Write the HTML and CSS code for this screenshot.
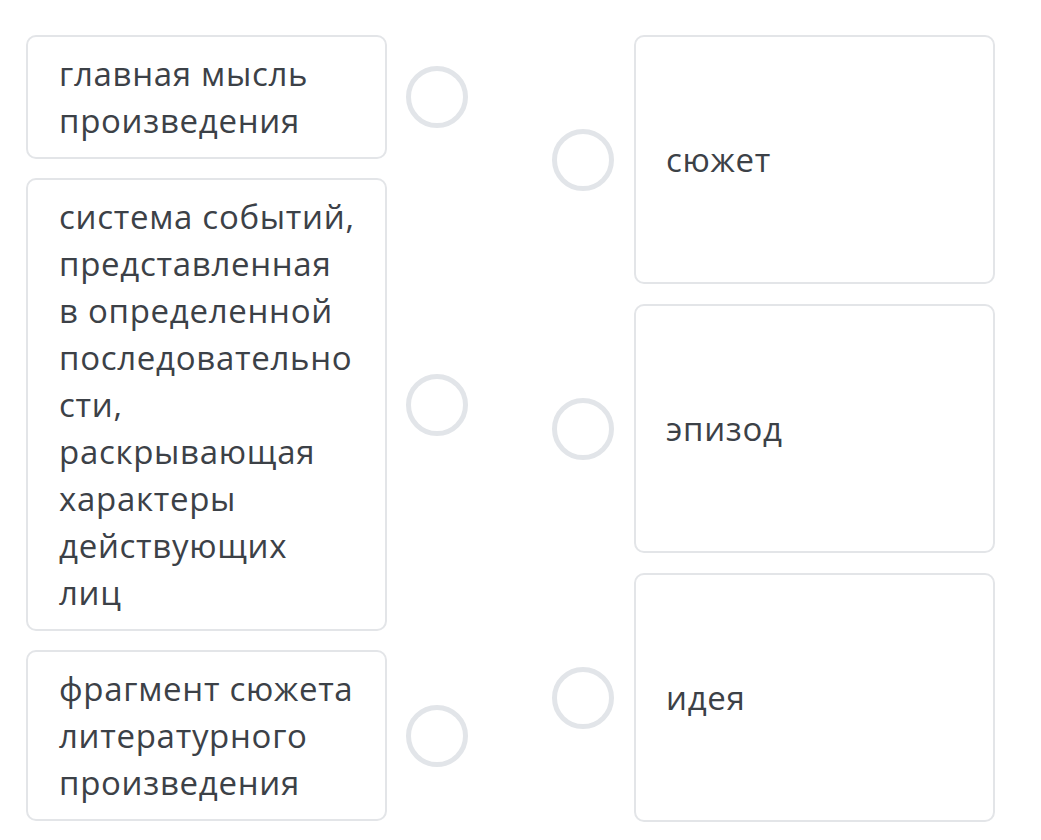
FILE: index.html
```html
<!DOCTYPE html>
<html lang="ru">
<head>
<meta charset="utf-8">
<link rel="stylesheet" href="styles.css">
</head>
<body>
<div class="match">
  <div class="col col-left">
    <div class="row">
      <div class="card card-left">главная мысль<br>произведения</div>
      <span class="dot"></span>
    </div>
    <div class="row">
      <div class="card card-left">система событий,<br>представленная<br>в определенной<br>последовательно<br>сти,<br>раскрывающая<br>характеры<br>действующих<br>лиц</div>
      <span class="dot"></span>
    </div>
    <div class="row">
      <div class="card card-left">фрагмент сюжета<br>литературного<br>произведения</div>
      <span class="dot"></span>
    </div>
  </div>
  <div class="col col-right">
    <div class="row">
      <span class="dot"></span>
      <div class="card card-right">сюжет</div>
    </div>
    <div class="row">
      <span class="dot"></span>
      <div class="card card-right">эпизод</div>
    </div>
    <div class="row">
      <span class="dot"></span>
      <div class="card card-right">идея</div>
    </div>
  </div>
</div>
</body>
</html>
```
FILE: styles.css
```css
html, body {
  margin: 0;
  padding: 0;
  background: #ffffff;
}
body {
  font-family: "Open Sans", "Noto Sans", sans-serif;
  color: #3c4147;
}
.match {
  display: flex;
  gap: 84px;
  padding: 35px 0 0 26px;
}
.col {
  display: flex;
  flex-direction: column;
  gap: 19px;
}
.col-right {
  gap: 20px;
}
.row {
  display: flex;
  align-items: center;
  gap: 19px;
}
.col-right .row {
  gap: 20px;
}
.card {
  box-sizing: border-box;
  width: 361px;
  border: 2px solid #e3e5e8;
  border-radius: 10px;
  font-size: 33px;
  line-height: 47px;
  letter-spacing: 0.7px;
  white-space: nowrap;
}
.card-left {
  padding: 13px 4px 13px 31px;
}
.card-right {
  height: 249px;
  display: flex;
  align-items: center;
  padding: 0 20px 0 30px;
}
.dot {
  box-sizing: border-box;
  width: 62px;
  height: 62px;
  border: 5px solid #e2e5e9;
  border-radius: 50%;
  flex: none;
}
```
